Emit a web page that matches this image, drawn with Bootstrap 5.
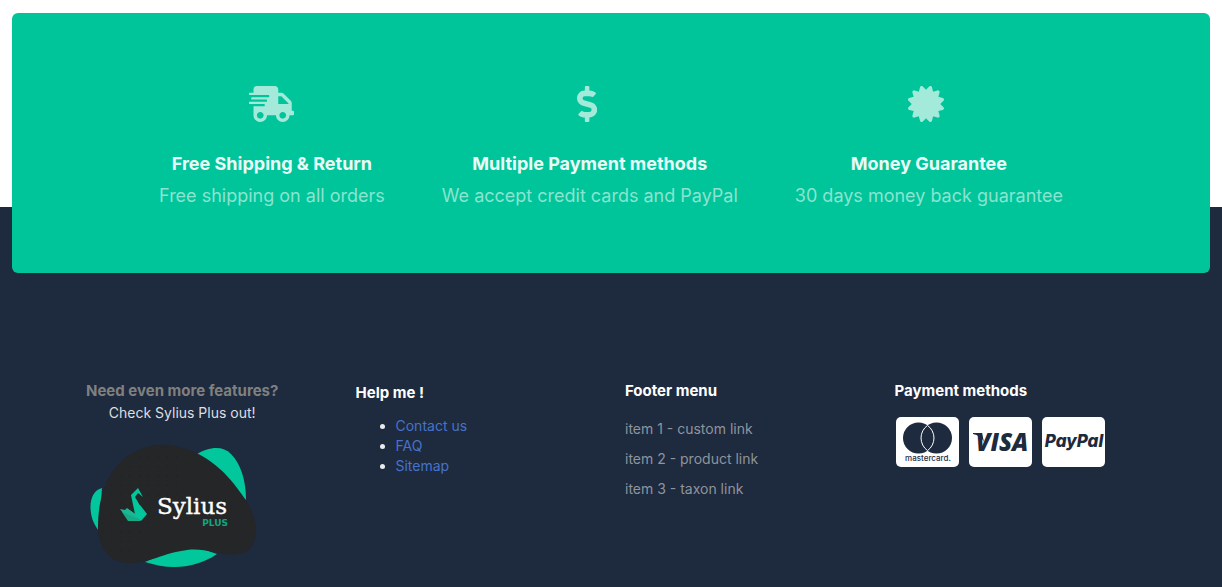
<!DOCTYPE html>
<html lang="en">
<head>
<meta charset="utf-8">
<meta name="viewport" content="width=device-width, initial-scale=1">
<title>Sylius shop footer</title>
<link href="https://cdn.jsdelivr.net/npm/bootstrap@5.3.0/dist/css/bootstrap.min.css" rel="stylesheet">
<style>
  body { font-family: Inter, "Liberation Sans", sans-serif; font-size: 14px; line-height: 20px; background: #fff; }
  .perks { margin: 13px 12px -66px; padding: 73px 24px 65px; background: #00c59a; border-radius: 6px; color: #a3eadb; z-index: 1; }
  .perk-list { column-gap: 57px; row-gap: 32px; }
  .perk-list svg { height: 36px; fill: currentColor; }
  .perk-list .narrow-icon { margin-right: 5px; }
  .perk-title { font-size: 18px; line-height: 24px; font-weight: 700; color: #eafbf7; margin: 30px 0 8px; }
  .perk-text { font-size: 18px; line-height: 24px; font-weight: 400; margin: 0; color: #8ae4d0; }
  .shop-footer { background: #1e2a3d; color: #e9eaec; padding: 174px 86px 16px; }
  .shop-footer .row { --bs-gutter-x: 28px; }
  .foot-title { font-size: 15px; line-height: 20px; font-weight: 700; color: #fff; margin: 0; }
  .foot-title.muted { color: #808080; }
  .plus-note { margin-top: 2px; color: #dcdee1; }
  .help-block { padding-top: 2px; }
  .help-list { padding-left: 40px; margin: 13px 0 0; }
  .help-list a { color: #4573cb; text-decoration: none; }
  .menu-list { margin: 13px 0 0; }
  .menu-list a { color: #8e949d; text-decoration: none; line-height: 30px; }
  .plus-art { width: 184px; height: 124px; margin-top: 21px; }
  .pay-cards { gap: 10px; margin: 16px 0 0 1px; }
</style>
</head>
<body class="d-flex flex-column min-vh-100">
<section class="perks position-relative">
  <div class="perk-list d-flex flex-wrap justify-content-center text-center">
    <div>
      <svg viewBox="0 0 640 512" aria-hidden="true"><path d="M624 352h-16V243.900c0-12.700-5.100-24.900-14.100-33.900L494 110.100c-9-9-21.200-14.100-33.900-14.100H416V48c0-26.500-21.500-48-48-48H112C85.500 0 64 21.500 64 48v48H8c-4.400 0-8 3.600-8 8v16c0 4.400 3.600 8 8 8h272c4.400 0 8 3.600 8 8v16c0 4.400-3.600 8-8 8H40c-4.400 0-8 3.600-8 8v16c0 4.400 3.600 8 8 8h208c4.400 0 8 3.600 8 8v16c0 4.400-3.600 8-8 8H8c-4.400 0-8 3.600-8 8v16c0 4.400 3.600 8 8 8h208c4.400 0 8 3.600 8 8v16c0 4.400-3.600 8-8 8H64v128c0 53 43 96 96 96s96-43 96-96h128c0 53 43 96 96 96s96-43 96-96h48c8.800 0 16-7.200 16-16v-32c0-8.800-7.200-16-16-16zM160 464c-26.500 0-48-21.500-48-48s21.500-48 48-48 48 21.500 48 48-21.500 48-48 48zm320 0c-26.500 0-48-21.500-48-48s21.500-48 48-48 48 21.500 48 48-21.500 48-48 48zm80-208H416V144h44.100l99.900 99.900V256z"/></svg>
      <h2 class="perk-title">Free Shipping &amp; Return</h2>
      <p class="perk-text">Free shipping on all orders</p>
    </div>
    <div>
      <svg class="narrow-icon" viewBox="0 0 288 512" aria-hidden="true"><path d="M209.200 233.400l-108-31.600C88.700 198.200 80 186.500 80 173.500c0-16.300 13.200-29.500 29.500-29.500h66.300c12.200 0 24.200 3.700 34.200 10.500 6.100 4.100 14.300 3.100 19.500-2l34.800-34c7.100-6.900 6.100-18.400-1.800-24.500C238 74.800 207.400 64.100 176 64V16c0-8.800-7.200-16-16-16h-32c-8.800 0-16 7.200-16 16v48h-2.500C45.800 64-5.400 118.700.5 183.600c4.200 46.100 39.400 83.600 83.800 96.600l102.500 30c12.500 3.700 21.200 15.300 21.200 28.300 0 16.300-13.200 29.500-29.500 29.500h-66.300C100 368 88 364.300 78 357.500c-6.100-4.100-14.300-3.100-19.500 2l-34.800 34c-7.100 6.900-6.100 18.400 1.800 24.500 24.500 19.200 55.100 29.900 86.500 30v48c0 8.800 7.200 16 16 16h32c8.800 0 16-7.200 16-16v-48.200c46.600-.9 90.300-28.600 105.700-72.700 21.500-61.600-14.600-124.800-72.500-141.700z"/></svg>
      <h2 class="perk-title">Multiple Payment methods</h2>
      <p class="perk-text">We accept credit cards and PayPal</p>
    </div>
    <div>
      <svg class="narrow-icon" viewBox="0 0 512 512" aria-hidden="true"><path d="M458.622 255.920l45.985-45.005c13.708-12.977 7.316-36.039-10.664-40.339l-62.650-15.990 17.661-62.015c4.991-17.838-11.829-34.663-29.661-29.671l-61.994 17.667-15.984-62.671C337.085.197 313.765-6.276 300.990 7.228L256 53.570 211.011 7.229c-12.630-13.351-36.047-7.234-40.325 10.668l-15.984 62.671-61.995-17.667C74.870 57.907 58.056 74.738 63.046 92.572l17.661 62.015-62.650 15.990C.069 174.878-6.310 197.944 7.392 210.915l45.985 45.005-45.985 45.004c-13.708 12.977-7.316 36.039 10.664 40.339l62.650 15.990-17.661 62.015c-4.991 17.838 11.829 34.663 29.661 29.671l61.994-17.667 15.984 62.671c4.439 18.575 27.696 24.018 40.325 10.668L256 458.610l44.989 46.001c12.500 13.488 35.987 7.486 40.325-10.668l15.984-62.671 61.994 17.667c17.836 4.994 34.651-11.837 29.661-29.671l-17.661-62.015 62.650-15.990c17.987-4.302 24.366-27.367 10.664-40.339l-45.984-45.004z"/></svg>
      <h2 class="perk-title">Money Guarantee</h2>
      <p class="perk-text">30 days money back guarantee</p>
    </div>
  </div>
</section>

<footer class="shop-footer flex-grow-1">
  <div class="row row-cols-1 row-cols-sm-2 row-cols-lg-4">
    <div class="col">
      <div class="d-inline-block text-center">
        <h3 class="foot-title muted">Need even more features?</h3>
        <div class="plus-note">Check Sylius Plus out!</div>
        <svg class="plus-art" viewBox="0 0 184 124" role="img" aria-label="Sylius Plus">
          <defs>
            <pattern id="dots" width="9.300" height="9.300" patternUnits="userSpaceOnUse"><circle cx="3" cy="4" r="1" fill="#1f2123"/></pattern>
          </defs>
          <g fill="#02c69c">
            <path d="M105 11C119 3 132 1 141 10c10 10 15 27 15 46Z"/>
            <path d="M12 44C3 46-1 57 1 69c1 8 5 14 8 18Z"/>
            <path d="M55 118c24 8 50 7 72-8l-30-10Z"/>
          </g>
          <path fill="#252628" d="M8 86C7 44 25 6 67 1c30-2 58 15 77 39 10 13 16 21 20 33 4 16 1 31-9 35-20 8-35-5-58-2-24 3-37 13-58 13C19 119 9 103 8 86Z"/>
          <path fill="url(#dots)" d="M12 86C11 46 29 8 68 4l28 4-2 60-35 20-20 25C19 113 13 99 12 86Z"/>
          <path fill="#02c69c" d="m41 51 7-7 5 9-5-4-3 4 10 17-9 5Z"/>
          <path fill="#1cb893" d="m30 65 5 1 2-2 14 10-12 3Z"/>
          <path fill="#17aa87" d="m32 68 15 6 7-4-4 7H38Z"/>
          <path fill="#02c69c" d="m50 61 7 9-6 7-4-4Z"/>
          <text x="67" y="70" fill="#fff" stroke="#fff" stroke-width=".400" font-family="DejaVu Serif, serif" font-size="23">Sylius</text>
          <text x="138" y="82" text-anchor="end" fill="#10a783" font-family="DejaVu Sans, sans-serif" font-size="9" font-weight="700">PLUS</text>
        </svg>
      </div>
    </div>
    <div class="col">
      <div class="help-block">
        <h3 class="foot-title">Help me !</h3>
        <ul class="help-list">
          <li><a href="#">Contact us</a></li>
          <li><a href="#">FAQ</a></li>
          <li><a href="#">Sitemap</a></li>
        </ul>
      </div>
    </div>
    <div class="col">
      <h3 class="foot-title">Footer menu</h3>
      <ul class="menu-list list-unstyled">
        <li><a href="#">item 1 - custom link</a></li>
        <li><a href="#">item 2 - product link</a></li>
        <li><a href="#">item 3 - taxon link</a></li>
      </ul>
    </div>
    <div class="col">
      <h3 class="foot-title">Payment methods</h3>
      <div class="pay-cards d-flex flex-wrap">
        <svg width="63" height="50" role="img" aria-label="mastercard">
          <rect width="63" height="50" rx="5" fill="#fff"/>
          <g fill="#1e2a3d"><circle cx="22.500" cy="21" r="15.500"/><circle cx="40.500" cy="21" r="15.500"/></g>
          <path fill="none" stroke="#fff" d="M31.500 8.400a15.500 15.500 0 0 1 0 25.200a15.500 15.500 0 0 1 0-25.200Z"/>
          <text x="32" y="44" text-anchor="middle" fill="#1e2a3d" font-family="Inter, sans-serif" font-size="8" font-weight="500">mastercard.</text>
        </svg>
        <svg width="63" height="50" role="img" aria-label="VISA">
          <rect width="63" height="50" rx="5" fill="#fff"/>
          <path fill="#1e2a3d" d="M4 16h9l2 9c-2-4-6-7-11-8Z"/>
          <text x="33" y="34" text-anchor="middle" fill="#1e2a3d" font-family="Open Sans, sans-serif" font-size="24" font-weight="800" font-style="italic">VISA</text>
        </svg>
        <svg width="63" height="50" role="img" aria-label="PayPal">
          <rect width="63" height="50" rx="5" fill="#fff"/>
          <text x="32" y="30" text-anchor="middle" fill="#1e2a3d" font-family="Inter, sans-serif" font-size="17" font-weight="800" font-style="italic">PayPal</text>
        </svg>
      </div>
    </div>
  </div>
</footer>
<script src="https://cdn.jsdelivr.net/npm/bootstrap@5.3.0/dist/js/bootstrap.bundle.min.js"></script>
</body>
</html>
